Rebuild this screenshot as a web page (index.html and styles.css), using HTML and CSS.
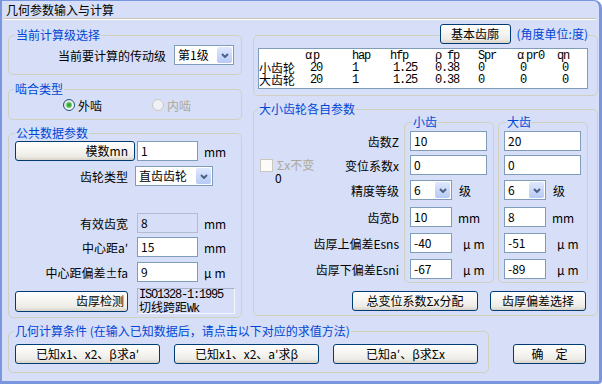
FILE: index.html
```html
<!DOCTYPE html>
<html lang="zh">
<head>
    <meta charset="UTF-8">
    <meta name="viewport" content="width=device-width, initial-scale=1.0">
    <title>几何参数输入与计算</title>
    <link rel="stylesheet" href="styles.css">
</head>
<body>
    <div class="frame">
        <div class="title">几何参数输入与计算</div>
        <div class="sep"></div>

        <div class="main">
            <!-- left column -->
            <div class="col-left">
                <div class="group g-stage">
                    <div class="legend">当前计算级选择</div>
                    <div class="stage-row">
                        <span>当前要计算的传动级</span>
                        <div class="select sel-stage">
                            <span class="sel-text">第1级</span>
                            <span class="sel-btn"><svg width="8" height="5" viewBox="0 0 8 5"><path d="M1 1l3 3 3-3" fill="none" stroke="#4d6185" stroke-width="2"/></svg></span>
                        </div>
                    </div>
                </div>

                <div class="group g-mesh">
                    <div class="legend">啮合类型</div>
                    <div class="mesh-row">
                        <div class="radio"><span class="dot on"></span>外啮</div>
                        <div class="radio off"><span class="dot"></span>内啮</div>
                    </div>
                </div>

                <div class="group g-common">
                    <div class="legend">公共数据参数</div>
                    <div class="frow r-mod">
                        <button class="btn btn-mod">模数mn</button>
                        <div class="inp w61">1</div>
                        <span class="unit">mm</span>
                    </div>
                    <div class="frow r-type">
                        <span class="lbl">齿轮类型</span>
                        <div class="select sel-type">
                            <span class="sel-text">直齿齿轮</span>
                            <span class="sel-btn"><svg width="8" height="5" viewBox="0 0 8 5"><path d="M1 1l3 3 3-3" fill="none" stroke="#4d6185" stroke-width="2"/></svg></span>
                        </div>
                    </div>
                    <div class="frow r-width">
                        <span class="lbl">有效齿宽</span>
                        <div class="inp w61 disabled">8</div>
                        <span class="unit">mm</span>
                    </div>
                    <div class="frow r-center">
                        <span class="lbl">中心距a′</span>
                        <div class="inp w61">15</div>
                        <span class="unit">mm</span>
                    </div>
                    <div class="frow r-dev">
                        <span class="lbl">中心距偏差±fa</span>
                        <div class="inp w61">9</div>
                        <span class="unit um">μm</span>
                    </div>
                    <div class="frow r-check">
                        <button class="btn btn-check">齿厚检测</button>
                        <div class="static">ISO1328-1:1995<br><span class="cn">切线跨距</span>Wk</div>
                    </div>
                </div>
            </div>

            <!-- right column -->
            <div class="col-right">
                <div class="group g-profile">
                    <div class="profile-head">
                        <button class="btn btn-profile">基本齿廓</button>
                        <span class="note">(角度单位:度)</span>
                    </div>
                    <div class="table">
                        <div class="trow">
                            <span></span><span><i class="g">α</i>p</span><span>hap</span><span>hfp</span><span>ρ fp</span><span>Spr</span><span><i class="g g3">α</i>pr0</span><span>qn</span>
                        </div>
                        <div class="trow">
                            <span class="cn">小齿轮</span><span class="v1">20</span><span>1</span><span class="v3">1.25</span><span>0.38</span><span>0</span><span class="v6">0</span><span class="v7">0</span>
                        </div>
                        <div class="trow">
                            <span class="cn">大齿轮</span><span class="v1">20</span><span>1</span><span class="v3">1.25</span><span>0.38</span><span>0</span><span class="v6">0</span><span class="v7">0</span>
                        </div>
                    </div>
                </div>

                <div class="group g-gears">
                    <div class="legend">大小齿轮各自参数</div>
                    <div class="gears-row">
                        <div class="labels">
                            <div class="srow r1"><span>齿数Z</span></div>
                            <div class="srow r2 split">
                                <span class="cb"><span class="box"></span>Σx不变</span>
                                <span>变位系数x</span>
                            </div>
                            <div class="srow r3 split">
                                <span class="zero">0</span>
                                <span>精度等级</span>
                            </div>
                            <div class="srow r4"><span>齿宽b</span></div>
                            <div class="srow r5"><span>齿厚上偏差Esns</span></div>
                            <div class="srow r6"><span>齿厚下偏差Esni</span></div>
                        </div>

                        <div class="group sub">
                            <div class="legend">小齿</div>
                            <div class="srow r1"><div class="inp w77">10</div></div>
                            <div class="srow r2"><div class="inp w77">0</div></div>
                            <div class="srow r3">
                                <div class="select sel-grade">
                                    <span class="sel-text">6</span>
                                    <span class="sel-btn"><svg width="8" height="5" viewBox="0 0 8 5"><path d="M1 1l3 3 3-3" fill="none" stroke="#4d6185" stroke-width="2"/></svg></span>
                                </div>
                                <span class="unit-grade">级</span>
                            </div>
                            <div class="srow r4"><div class="inp w42">10</div><span class="unit-mm">mm</span></div>
                            <div class="srow r5"><div class="inp w42">-40</div><span class="unit-um">μm</span></div>
                            <div class="srow r6"><div class="inp w42">-67</div><span class="unit-um">μm</span></div>
                        </div>

                        <div class="group sub sub-big">
                            <div class="legend">大齿</div>
                            <div class="srow r1"><div class="inp w77">20</div></div>
                            <div class="srow r2"><div class="inp w77">0</div></div>
                            <div class="srow r3">
                                <div class="select sel-grade">
                                    <span class="sel-text">6</span>
                                    <span class="sel-btn"><svg width="8" height="5" viewBox="0 0 8 5"><path d="M1 1l3 3 3-3" fill="none" stroke="#4d6185" stroke-width="2"/></svg></span>
                                </div>
                                <span class="unit-grade">级</span>
                            </div>
                            <div class="srow r4"><div class="inp w42">8</div><span class="unit-mm">mm</span></div>
                            <div class="srow r5"><div class="inp w42">-51</div><span class="unit-um">μm</span></div>
                            <div class="srow r6"><div class="inp w42">-89</div><span class="unit-um">μm</span></div>
                        </div>
                    </div>
                    <div class="gears-btns">
                        <button class="btn btn-sum">总变位系数Σx分配</button>
                        <button class="btn btn-dev">齿厚偏差选择</button>
                    </div>
                </div>
            </div>
        </div>

        <div class="bottom">
            <div class="group g-calc">
                <div class="legend">几何计算条件 (在输入已知数据后，请点击以下对应的求值方法)</div>
                <div class="calc-btns">
                    <button class="btn btn-calc">已知x1、x2、β求a′</button>
                    <button class="btn btn-calc">已知x1、x2、a′求β</button>
                    <button class="btn btn-calc">已知a′、β求Σx</button>
                </div>
            </div>
            <button class="btn btn-ok">确　定</button>
        </div>
    </div>
</body>
</html>
```

FILE: styles.css
```css
body {
    margin: 0;
    font-family: "Noto Sans CJK SC", "Liberation Sans", sans-serif;
    font-size: 12px;
    color: #000;
}

.frame {
    width: 602px;
    height: 384px;
    box-sizing: border-box;
    background: #d6dff7;
    border: solid #7a96df;
    border-width: 1px 3px 3px 2px;
    border-radius: 0 8px 4px 0;
    overflow: hidden;
}

.title {
    height: 17px;
    line-height: 17px;
    padding-left: 4px;
}

.sep {
    margin: 0 3px 0 2px;
    border-top: 1px solid #c5c2b2;
    border-bottom: 1px solid #fff;
}

.main {
    display: flex;
    gap: 11px;
    padding-left: 6px;
}

.col-left {
    width: 234px;
}

.col-right {
    width: 345px;
}

/* group boxes */
.group {
    box-sizing: border-box;
    border: 1px solid #d0d0bf;
    border-radius: 5px;
}

.legend {
    width: fit-content;
    margin: -8px 0 0 6px;
    padding: 0 1px;
    line-height: 14px;
    color: #0046d5;
    background: #d6dff7;
    white-space: nowrap;
}

/* controls */
.btn {
    box-sizing: border-box;
    font: inherit;
    color: #000;
    padding: 0;
    height: 20px;
    border: 1px solid #003c74;
    border-radius: 3px;
    background: linear-gradient(to bottom, #ffffff 0%, #f6f5f1 45%, #ecebe6 80%, #d8d3c8 100%);
    line-height: 18px;
    white-space: nowrap;
}

.inp {
    box-sizing: border-box;
    height: 20px;
    border: 1px solid #7f9db9;
    background: #fff;
    padding-left: 3px;
    line-height: 18px;
    white-space: nowrap;
}

.inp.disabled {
    background: #d6dff7;
    border-color: #b3bccd;
}

.select {
    box-sizing: border-box;
    display: flex;
    height: 20px;
    border: 1px solid #7f9db9;
    background: #fff;
}

.sel-text {
    flex: 1;
    padding-left: 3px;
    line-height: 18px;
    white-space: nowrap;
}

.sel-btn {
    width: 15px;
    margin: 1px;
    border-radius: 2px;
    background: linear-gradient(to bottom, #dfe8fe, #b7caf6);
    display: flex;
    align-items: center;
    justify-content: center;
}

.w61 { width: 61px; }
.w77 { width: 77px; }
.w42 { width: 42px; }

/* current stage */
.g-stage {
    margin-top: 15px;
    height: 40px;
}

.stage-row {
    display: flex;
    justify-content: flex-end;
    align-items: center;
    gap: 8px;
    height: 20px;
    margin-top: 3px;
    padding-right: 7px;
}

.sel-stage { width: 60px; }

/* mesh type */
.g-mesh {
    margin-top: 14px;
    height: 31px;
}

.g-mesh .legend { margin-left: 5px; }

.mesh-row {
    display: flex;
    align-items: center;
    height: 18px;
    padding-left: 54px;
}

.radio {
    display: flex;
    align-items: center;
    gap: 3px;
    width: 92px;
}

.radio.off { color: #aca899; }

.dot {
    width: 12px;
    height: 12px;
    box-sizing: border-box;
    border: 1px solid #1c5180;
    border-radius: 50%;
    background: linear-gradient(135deg, #dcdcd4, #fff);
}

.dot.on {
    background: radial-gradient(circle, #2a9f2a 0, #45b845 2px, #a8dca8 3px, transparent 3.5px), linear-gradient(135deg, #dcdcd4, #fff);
}

.radio.off .dot {
    border-color: #cac8bb;
    background: #eef1f8;
}

/* common data */
.g-common {
    margin-top: 13px;
    height: 185px;
}

.frow {
    display: flex;
    align-items: center;
    height: 20px;
}

.r-mod { margin-top: 1px; }
.r-type { margin-top: 5px; }
.r-width { margin-top: 27px; }
.r-center { margin-top: 4px; }
.r-dev { margin-top: 5px; }
.r-check { margin-top: 6px; height: 26px; }

.lbl {
    width: 119px;
    margin-right: 9px;
    text-align: right;
    white-space: nowrap;
}

.btn-mod {
    width: 120px;
    margin: 0 2px 0 6px;
    text-align: right;
    padding-right: 6px;
}

.unit { margin-left: 6px; }
.unit.um { letter-spacing: 3px; }

.sel-type {
    width: 78px;
    margin-left: -2px;
}

.btn-check {
    width: 113px;
    height: 21px;
    margin: 0 9px 0 6px;
    text-align: right;
    padding-right: 3px;
}

.static {
    box-sizing: border-box;
    width: 98px;
    height: 26px;
    padding: 0 0 0 1px;
    border: 1px solid;
    border-color: #aab4c8 #f4f6fb #f4f6fb #aab4c8;
    font-family: "Liberation Mono", "Noto Sans CJK SC", monospace;
    letter-spacing: -1.2px;
    line-height: 12px;
}

.static .cn,
.table .cn {
    font-family: "Noto Sans CJK SC", sans-serif;
    letter-spacing: 0;
}

/* profile table */
.g-profile {
    margin-top: 15px;
    height: 61px;
}

.profile-head {
    display: flex;
    justify-content: flex-end;
    align-items: center;
    height: 20px;
    margin-top: -12px;
    padding-right: 9px;
}

.btn-profile { width: 71px; }

.note {
    color: #0046d5;
    background: #d6dff7;
    padding-left: 6px;
    line-height: 14px;
}

.table {
    box-sizing: border-box;
    width: 330px;
    height: 41px;
    margin: 4px 0 0 4px;
    padding-top: 1px;
    border: 1px solid #7f9db9;
    background: #fff;
}

.trow {
    display: grid;
    grid-template-columns: 46px 47px 38px 45px 43px 39px 40px 1fr;
    height: 12px;
    line-height: 12px;
    font-family: "Liberation Mono", "Noto Sans CJK SC", monospace;
    letter-spacing: -1.2px;
    white-space: pre;
}

.g {
    font-style: normal;
    margin-right: 2px;
}

.g3 { margin-right: 3px; }
.v1, .v7 { padding-left: 5px; }
.v3, .v6 { padding-left: 3px; }

/* gear parameters */
.g-gears {
    margin-top: 13px;
    height: 207px;
}

.g-gears > .legend { margin-left: 4px; }

.gears-row {
    display: flex;
    margin-top: 6px;
}

.labels {
    box-sizing: border-box;
    width: 150px;
    padding: 9px 5px 0 6px;
}

.labels .srow { justify-content: flex-end; }
.labels .srow.split { justify-content: space-between; }

.sub {
    width: 90px;
    height: 161px;
}

.sub-big { margin-left: 4px; }

.sub .legend { margin-left: 7px; }

.srow {
    display: flex;
    align-items: center;
    height: 20px;
    white-space: nowrap;
}

.sub .srow { padding-left: 5px; }
.sub .r1 { margin-top: 2px; }

.r2 { margin-top: 4px; }
.r3 { margin-top: 5px; }
.r4 { margin-top: 7px; }
.r5 { margin-top: 6px; }
.r6 { margin-top: 6px; }

.cb {
    display: flex;
    align-items: center;
    gap: 4px;
    line-height: 12px;
    color: #aca899;
}

.box {
    width: 13px;
    height: 13px;
    box-sizing: border-box;
    border: 1px solid #cac8bb;
    background: #fbfbf9;
}

.zero {
    align-self: flex-start;
    margin: -8px 0 0 15px;
    line-height: 12px;
}

.sel-grade { width: 42px; }
.unit-grade { margin-left: 7px; }
.unit-mm { margin-left: 6px; }
.unit-um { margin-left: 11px; letter-spacing: 3px; }

.gears-btns {
    display: flex;
    justify-content: flex-end;
    gap: 12px;
    margin-top: 8px;
    padding-right: 11px;
}

.btn-sum { width: 126px; }
.btn-dev { width: 96px; }

/* bottom */
.bottom {
    display: flex;
    align-items: flex-start;
    margin-top: 13px;
    padding-left: 6px;
}

.g-calc {
    width: 481px;
    height: 42px;
}

.g-calc .legend { margin-left: 5px; }

.calc-btns {
    display: flex;
    gap: 14px;
    margin: 6px 0 0 6px;
}

.btn-calc { width: 145px; }

.btn-ok {
    width: 73px;
    margin: 13px 0 0 24px;
}
```
